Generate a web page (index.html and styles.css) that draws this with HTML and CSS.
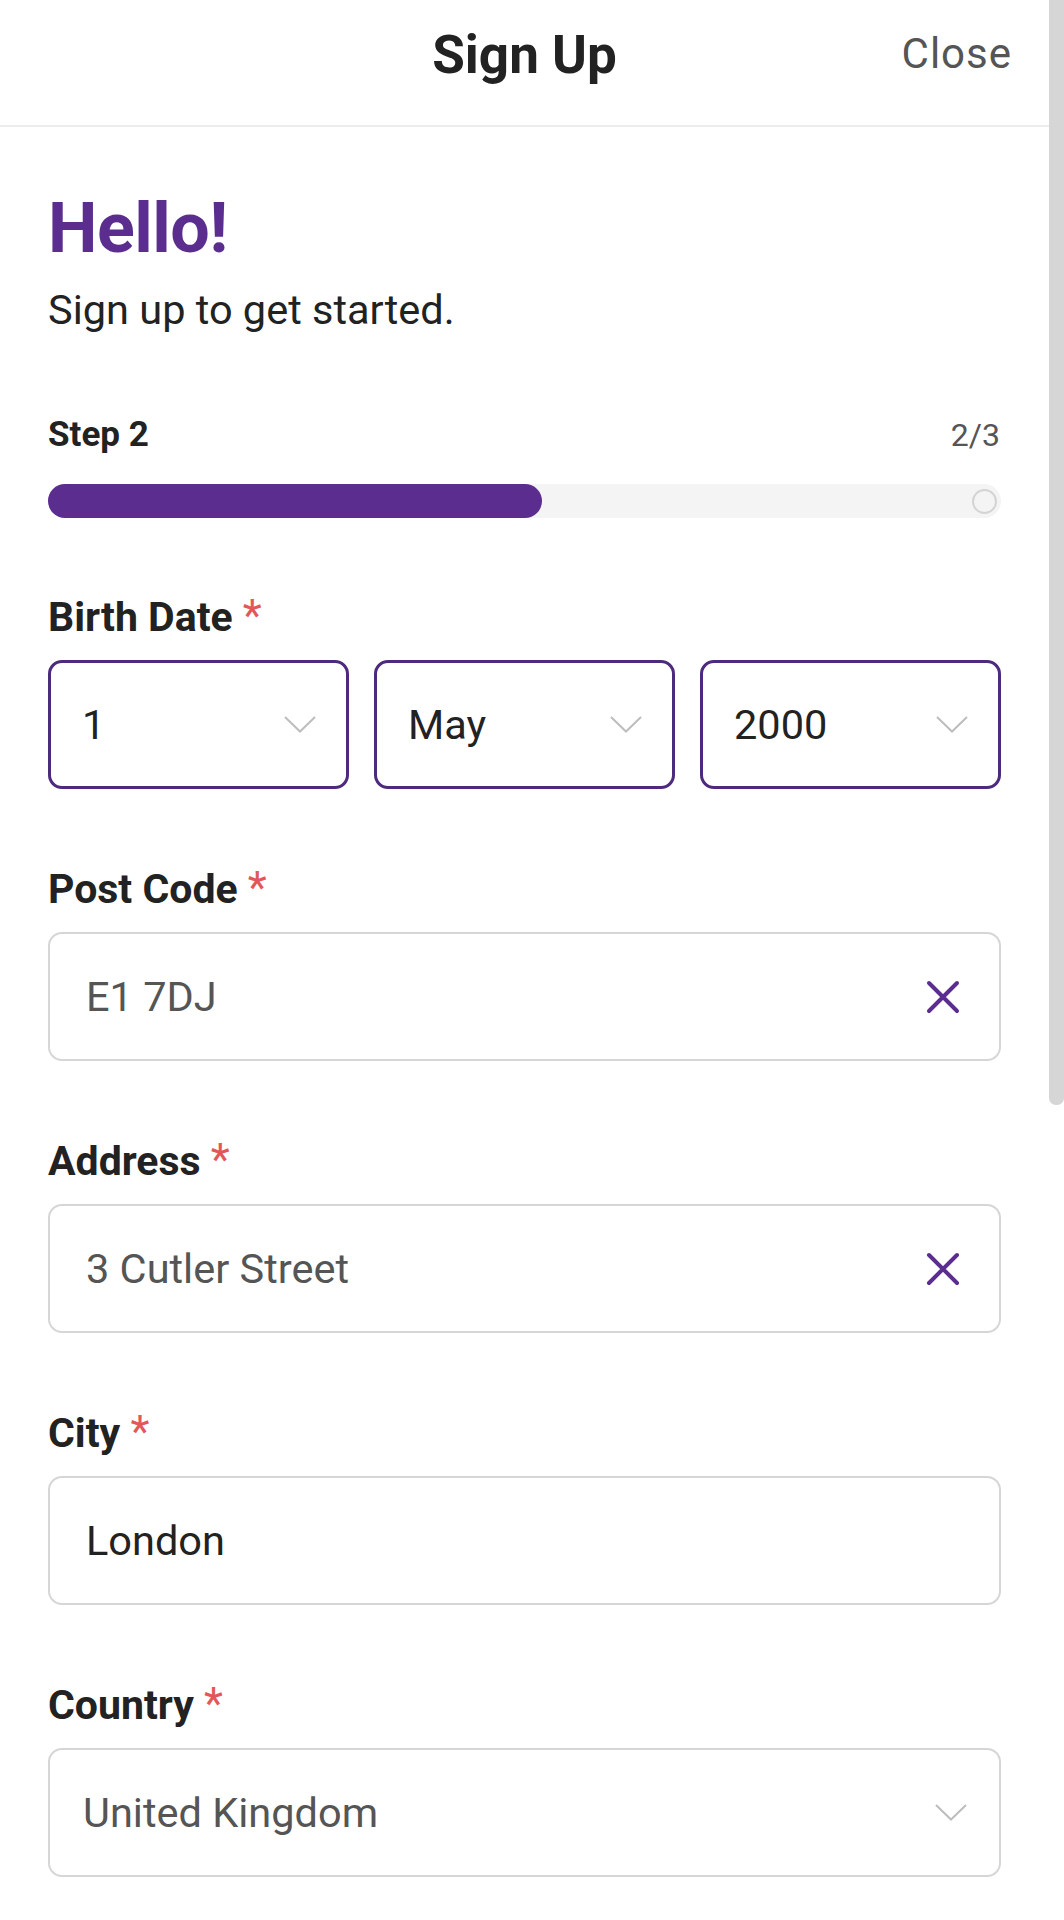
FILE: index.html
```html
<!DOCTYPE html>
<html lang="en">
<head>
<meta charset="utf-8">
<title>Sign Up</title>
<link rel="stylesheet" href="styles.css">
</head>
<body>
<div class="app">
  <header class="topbar">
    <span></span>
    <h1 class="topbar-title">Sign Up</h1>
    <span class="topbar-close">Close</span>
  </header>

  <main class="content">
    <h2 class="hello">Hello!</h2>
    <p class="subtitle">Sign up to get started.</p>

    <div class="step-row">
      <span class="step-label">Step 2</span>
      <span class="step-count">2/3</span>
    </div>
    <div class="progress">
      <div class="progress-fill" style="width: 51.8%"></div>
      <span class="progress-dot"></span>
    </div>

    <section class="field field-first">
      <div class="label">Birth Date <span class="req">*</span></div>
      <div class="date-row">
        <div class="box box-date">
          <span class="value">1</span>
          <svg class="chev" width="32" height="17" viewBox="0 0 32 17"><polyline points="1,1 16,15.5 31,1" fill="none" stroke="#bdbdbd" stroke-width="2"/></svg>
        </div>
        <div class="box box-date">
          <span class="value">May</span>
          <svg class="chev" width="32" height="17" viewBox="0 0 32 17"><polyline points="1,1 16,15.5 31,1" fill="none" stroke="#bdbdbd" stroke-width="2"/></svg>
        </div>
        <div class="box box-date">
          <span class="value">2000</span>
          <svg class="chev" width="32" height="17" viewBox="0 0 32 17"><polyline points="1,1 16,15.5 31,1" fill="none" stroke="#bdbdbd" stroke-width="2"/></svg>
        </div>
      </div>
    </section>

    <section class="field">
      <div class="label">Post Code <span class="req">*</span></div>
      <div class="box box-text">
        <span class="value muted">E1 7DJ</span>
        <svg class="clear" width="34" height="34" viewBox="0 0 34 34"><path d="M3 3 L31 31 M31 3 L3 31" stroke="#5b2d8e" stroke-width="4" stroke-linecap="round" fill="none"/></svg>
      </div>
    </section>

    <section class="field">
      <div class="label">Address <span class="req">*</span></div>
      <div class="box box-text">
        <span class="value muted">3 Cutler Street</span>
        <svg class="clear" width="34" height="34" viewBox="0 0 34 34"><path d="M3 3 L31 31 M31 3 L3 31" stroke="#5b2d8e" stroke-width="4" stroke-linecap="round" fill="none"/></svg>
      </div>
    </section>

    <section class="field">
      <div class="label">City <span class="req">*</span></div>
      <div class="box box-text">
        <span class="value">London</span>
      </div>
    </section>

    <section class="field">
      <div class="label">Country <span class="req">*</span></div>
      <div class="box box-select">
        <span class="value muted">United Kingdom</span>
        <svg class="chev" width="32" height="17" viewBox="0 0 32 17"><polyline points="1,1 16,15.5 31,1" fill="none" stroke="#bdbdbd" stroke-width="2"/></svg>
      </div>
    </section>
  </main>
</div>
<div class="scroll-thumb"></div>
</body>
</html>
```

FILE: styles.css
```css
* { box-sizing: border-box; }
html, body { margin: 0; padding: 0; }
body {
  background: #ffffff;
  font-family: Roboto, "Liberation Sans", Arial, sans-serif;
  color: #222222;
  width: 1064px;
  height: 1920px;
  overflow: hidden;
}
.app {
  width: 1049px;
}
.topbar {
  display: grid;
  grid-template-columns: 1fr auto 1fr;
  align-items: start;
  height: 127px;
  border-bottom: 2px solid #ececec;
}
.topbar-title {
  margin: 0;
  padding-top: 25px;
  font-size: 53px;
  line-height: 60px;
  font-weight: 700;
  color: #222222;
}
.topbar-close {
  justify-self: end;
  padding-top: 24px;
  padding-right: 37px;
  font-size: 42px;
  line-height: 60px;
  font-weight: 400;
  letter-spacing: 1px;
  color: #555555;
}
.content {
  padding: 0 48px;
}
.hello {
  margin: 61px 0 0;
  font-size: 70px;
  line-height: 80px;
  font-weight: 700;
  color: #5b2d8e;
  letter-spacing: -0.5px;
}
.subtitle {
  margin: 18px 0 0;
  font-size: 41.5px;
  line-height: 48px;
  font-weight: 400;
  color: #222222;
}
.step-row {
  display: flex;
  justify-content: space-between;
  align-items: baseline;
  margin-top: 81px;
  height: 40px;
  line-height: 40px;
}
.step-label {
  font-size: 35px;
  font-weight: 700;
  color: #222222;
}
.step-count {
  font-size: 32px;
  font-weight: 400;
  color: #555555;
  padding-right: 1px;
}
.progress {
  display: flex;
  align-items: center;
  margin-top: 29px;
  height: 34px;
  border-radius: 17px;
  background: #f4f4f4;
}
.progress-fill {
  height: 34px;
  border-radius: 17px;
  background: #5b2d8e;
}
.progress-dot {
  margin-left: auto;
  margin-right: 4px;
  width: 25px;
  height: 25px;
  border-radius: 50%;
  border: 2px solid #d4d4d4;
}
.field {
  margin-top: 75px;
}
.field.field-first {
  margin-top: 74px;
}
.label {
  font-size: 41px;
  line-height: 48px;
  font-weight: 700;
  color: #222222;
  margin-bottom: 19px;
}
.req {
  color: #e25858;
  font-weight: 400;
  font-size: 44px;
}
.date-row {
  display: grid;
  grid-template-columns: 1fr 1fr 1fr;
  gap: 25px;
}
.box {
  display: flex;
  align-items: center;
  height: 129px;
  border-radius: 14px;
  background: #ffffff;
}
.box-date {
  border: 3px solid #4d2a7d;
  padding: 0 30px 0 31px;
}
.box-text {
  border: 2px solid #d6d6d6;
  padding: 0 39px 0 36px;
}
.box-select {
  border: 2px solid #d6d6d6;
  padding: 0 32px 0 33px;
}
.value {
  font-size: 41.5px;
  line-height: 48px;
  font-weight: 400;
  color: #222222;
}
.value.muted {
  color: #555555;
}
.chev, .clear {
  margin-left: auto;
  flex: none;
}
.scroll-thumb {
  position: absolute;
  top: 0;
  left: 1049px;
  width: 15px;
  height: 1105px;
  background: #d6d6d6;
  border-radius: 0 0 7px 7px;
}
```
